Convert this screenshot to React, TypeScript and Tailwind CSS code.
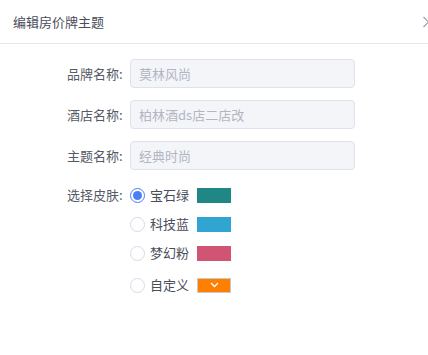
const skins = [
  { name: "宝石绿", color: "bg-[#1f8786]", checked: true },
  { name: "科技蓝", color: "bg-[#31a5d2]", checked: false },
  { name: "梦幻粉", color: "bg-[#d25475]", checked: false },
];

function Field({ label, value }: { label: string; value: string }) {
  return (
    <div className="flex items-center">
      <span className="w-[63px] text-[#555a66] whitespace-nowrap">{label}</span>
      <div className="w-[225px] h-[29px] rounded-sm border border-[#dfe2eb] bg-[#f4f5f9] flex items-center pl-[8px] text-[#b3b6c2]">
        {value}
      </div>
    </div>
  );
}

function Radio({ checked }: { checked: boolean }) {
  return checked ? (
    <span className="w-[15px] h-[15px] rounded-full border border-[#4b7ef6] flex items-center justify-center">
      <span className="w-[9px] h-[9px] rounded-full bg-[#4b7ef6]" />
    </span>
  ) : (
    <span className="w-[15px] h-[15px] rounded-full border border-[#d5dae6] bg-white" />
  );
}

export default function App() {
  return (
    <div
      className="w-[428px] h-[355px] bg-white text-[13px] overflow-hidden"
      style={{ fontFamily: '"Noto Sans CJK SC", "Noto Sans", sans-serif' }}
    >
      <div className="h-[44px] border-b border-[#e6e6ea] flex items-center justify-between pl-[13px]">
        <span className="text-[#4a4d5a]">编辑房价牌主题</span>
        <svg width="8" height="12" viewBox="0 0 8 12" className="mr-[-2px]">
          <path d="M1.5 1 L6.5 6 L1.5 11" fill="none" stroke="#9a9ca6" strokeWidth="1.1" />
        </svg>
      </div>

      <div className="pl-[67px] pt-[15px] flex flex-col gap-[12px]">
        <Field label="品牌名称:" value="莫林风尚" />
        <Field label="酒店名称:" value="柏林酒ds店二店改" />
        <Field label="主题名称:" value="经典时尚" />
      </div>

      <div className="pl-[67px] pt-[15px] flex">
        <span className="w-[63px] h-[20px] leading-[20px] text-[#555a66] whitespace-nowrap">选择皮肤:</span>
        <div className="flex flex-col gap-[9px]">
          {skins.map((s) => (
            <div key={s.name} className="flex items-center h-[20px]">
              <Radio checked={s.checked} />
              <span className="ml-[5px] w-[47px] text-[#4a4d5a]">{s.name}</span>
              <span className={`w-[34px] h-[15px] ${s.color}`} />
            </div>
          ))}
          <div className="flex items-center h-[20px] mt-[3px]">
            <Radio checked={false} />
            <span className="ml-[5px] w-[47px] text-[#4a4d5a]">自定义</span>
            <span className="w-[34px] h-[15px] bg-[#ff7f00] border border-[#c9c9c9] flex items-center justify-center">
              <svg width="9" height="6" viewBox="0 0 9 6">
                <path d="M1 1 L4.5 4.5 L8 1" fill="none" stroke="#ffffff" strokeWidth="1.3" />
              </svg>
            </span>
          </div>
        </div>
      </div>
    </div>
  );
}
